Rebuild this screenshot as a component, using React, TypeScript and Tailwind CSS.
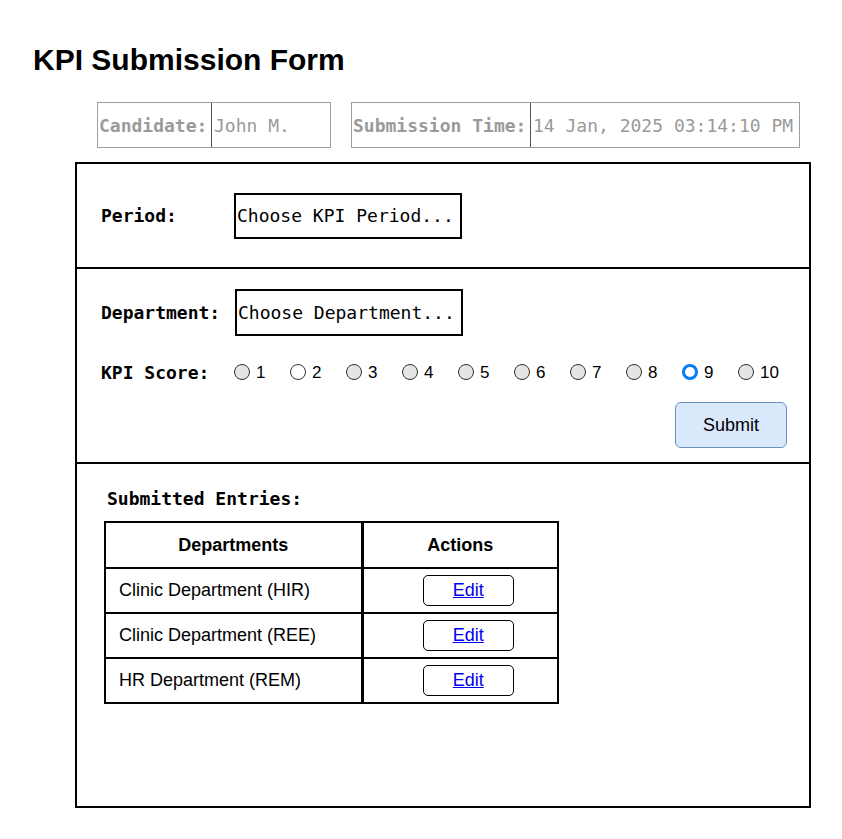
import React, { useState } from 'react';

const mono = "font-['DejaVu_Sans_Mono',monospace]";
const sans = "font-['Liberation_Sans',Arial,sans-serif]";

const entries = ['Clinic Department (HIR)', 'Clinic Department (REE)', 'HR Department (REM)'];

const InfoBox = ({ label, value, labelW, w }: any) => (
  <div className={`flex h-[46px] border border-[#9e9e9e] ${w}`}>
    <div className={`flex items-center pl-[1px] border-r border-[#555] ${labelW} text-[18px] font-bold text-[#9a9a9a] ${mono}`}>{label}</div>
    <div className={`flex items-center pl-[2px] text-[18px] text-[#9a9a9a] ${mono}`}>{value}</div>
  </div>
);

const Radio = ({ n, checked, white, onClick }: any) => (
  <button onClick={onClick} className="flex items-center w-[56px] shrink-0">
    {checked ? (
      <span className="w-[16px] h-[16px] rounded-full border-[3.5px] border-[#0a7cf5] bg-white" />
    ) : (
      <span className={`w-[16px] h-[16px] rounded-full border border-[#333] ${white ? 'bg-white' : 'bg-[#e4e4e4]'}`} />
    )}
    <span className={`ml-[6px] text-[17px] leading-[18px] pt-[2px] text-black ${sans}`}>{n}</span>
  </button>
);

const App: React.FC = () => {
  const [score, setScore] = useState(9);

  return (
    <div className={`min-h-screen bg-white text-black ${sans}`}>
      <h1 className="pt-[42px] pl-[33px] text-[30px] leading-[36px] font-bold">KPI Submission Form</h1>

      {/* header info */}
      <div className="flex mt-[24px] ml-[97px] gap-[20px]">
        <InfoBox label="Candidate:" value="John M." labelW="w-[114px]" w="w-[234px]" />
        <InfoBox label="Submission Time:" value="14 Jan, 2025 03:14:10 PM" labelW="w-[179px]" w="w-[449px]" />
      </div>

      {/* main panel */}
      <div className="mt-[14px] ml-[75px] w-[736px] h-[646px] border-2 border-black flex flex-col">
        <div className="h-[105px] border-b-2 border-black flex items-center pl-[24px]">
          <span className={`w-[133px] shrink-0 text-[18px] font-bold ${mono}`}>Period:</span>
          <div className={`w-[228px] h-[46px] border-2 border-black flex items-center pl-[1px] text-[18px] ${mono}`}>Choose KPI Period...</div>
        </div>

        <div className="border-b-2 border-black pl-[24px] pr-[22px] pt-[20px] pb-[14px]">
          <div className="flex items-center">
            <span className={`w-[134px] shrink-0 text-[18px] font-bold ${mono}`}>Department:</span>
            <div className={`w-[228px] h-[47px] border-2 border-black flex items-center pl-[1px] text-[18px] ${mono}`}>Choose Department...</div>
          </div>
          <div className="flex items-center h-[24px] mt-[24px]">
            <span className={`w-[133px] shrink-0 text-[18px] font-bold ${mono}`}>KPI Score:</span>
            {[1, 2, 3, 4, 5, 6, 7, 8, 9, 10].map(n => (
              <Radio key={n} n={n} checked={score === n} white={n === 2} onClick={() => setScore(n)} />
            ))}
          </div>
          <div className="flex justify-end mt-[18px]">
            <button className={`w-[112px] h-[46px] rounded-[6px] bg-[#dae8fc] border border-[#6c8ebf] text-[18px] ${sans}`}>Submit</button>
          </div>
        </div>

        <div className="flex-1 pl-[27px] pt-[23px]">
          <div className={`ml-[3px] text-[18px] leading-[24px] font-bold ${mono}`}>Submitted Entries:</div>
          <table className="mt-[10px] border-collapse border-2 border-black">
            <thead>
              <tr className="h-[46px]">
                <th className="w-[257px] border-2 border-black text-[18px] font-bold">Departments</th>
                <th className="w-[196px] border-2 border-black border-l-[3px] text-[18px] font-bold">Actions</th>
              </tr>
            </thead>
            <tbody>
              {entries.map(e => (
                <tr key={e} className="h-[45px]">
                  <td className="border-2 border-black pl-[13px] text-[18px]">{e}</td>
                  <td className="border-2 border-black border-l-[3px]">
                    <div className="flex justify-center pl-[16px]">
                      <button className="w-[91px] h-[31px] rounded-[5px] border-[1.5px] border-black flex items-center justify-center">
                        <span className="text-[18px] text-[#0000ee] underline">Edit</span>
                      </button>
                    </div>
                  </td>
                </tr>
              ))}
            </tbody>
          </table>
        </div>
      </div>
    </div>
  );
};

export default App;
